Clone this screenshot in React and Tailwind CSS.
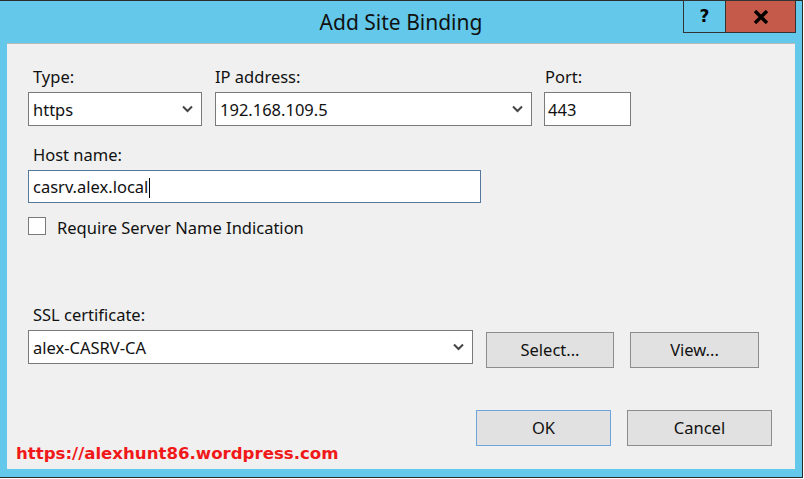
import React from "react";

const ui = { fontFamily: '"Noto Sans", "Open Sans", "Liberation Sans", sans-serif' };

// little dropdown chevron used by the combo boxes
function Chevron() {
  return (
    <svg width="11" height="8" viewBox="0 0 11 8" className="shrink-0">
      <polyline points="1,1.5 5.5,6 10,1.5" fill="none" stroke="#444" strokeWidth="2" />
    </svg>
  );
}

function Combo({ value, className }) {
  return (
    <div
      className={`flex items-center justify-between bg-white border border-[#7a7a7a] pl-[4px] pr-[8px] text-[16.5px] text-[#111] ${className}`}
    >
      <span className="pt-[2px]">{value}</span>
      <Chevron />
    </div>
  );
}

function Button({ children, className, blue }) {
  return (
    <div
      className={`flex items-center justify-center bg-[#e1e1e1] border pt-[1px] text-[16.5px] text-[#111] ${
        blue ? "border-[#6ea3dc]" : "border-[#8c8c8c]"
      } ${className}`}
    >
      {children}
    </div>
  );
}

export default function App() {
  return (
    <div
      className="relative w-[804px] h-[479px] overflow-hidden bg-white"
      style={ui}
    >
      <div className="flex flex-col w-[803px] h-[478px] bg-[#63c8ea] border-t border-r border-b border-[#2b2b2b]">
        {/* title bar */}
        <div className="relative flex h-[42px]">
          <div className="flex-1 flex justify-center pt-[6px] text-[21px] text-[#111]">
            Add Site Binding
          </div>
          <div className="absolute right-[6px] top-[-1px] flex h-[33px]">
            <div className="flex items-center justify-center w-[43px] border border-[#333] bg-[#63c8ea] text-[17px] font-bold text-black" style={{ fontFamily: '"DejaVu Sans", sans-serif' }}>
              ?
            </div>
            <div className="flex items-center justify-center w-[70px] border border-l-0 border-[#333] bg-[#c55a4b]">
              <svg width="16" height="14" viewBox="0 0 16 14">
                <path d="M2 1 L14 13 M14 1 L2 13" stroke="#000" strokeWidth="3.4" />
              </svg>
            </div>
          </div>
        </div>

        {/* client area */}
        <div className="ml-[7px] mr-[7px] h-[426px] bg-[#f0f0f0] border-t border-[#b9b9b9] pl-[21px] pt-[22px] text-[#111]">
          <div className="flex">
            <div className="flex flex-col w-[174px]">
              <div className="h-[20px] pl-[5px] text-[16.5px] leading-[22px]">Type:</div>
              <Combo value="https" className="mt-[6px] h-[34px]" />
            </div>
            <div className="flex flex-col w-[317px] ml-[13px]">
              <div className="h-[20px] text-[16.5px] leading-[22px]">IP address:</div>
              <Combo value="192.168.109.5" className="mt-[6px] h-[34px]" />
            </div>
            <div className="flex flex-col w-[87px] ml-[12px]">
              <div className="h-[20px] pl-[1px] text-[16.5px] leading-[22px]">Port:</div>
              <div className="mt-[6px] h-[34px] flex items-center bg-white border border-[#7a7a7a] pl-[3px] pt-[2px] text-[16.5px]">443</div>
            </div>
          </div>

          <div className="mt-[18px] h-[20px] pl-[5px] text-[16.5px] leading-[22px]">Host name:</div>
          <div className="mt-[6px] w-[453px] h-[33px] flex items-center bg-white border border-[#56789c] pl-[4px] pt-[2px] text-[16.5px]">
            casrv.alex.local
            <span className="inline-block w-[1px] h-[20px] bg-black ml-[1px]" />
          </div>

          <div className="mt-[14px] flex items-center h-[18px]">
            <div className="w-[18px] h-[18px] bg-white border border-[#7a7a7a]" />
            <span className="ml-[11px] pt-[3px] text-[16.5px] leading-[20px]">Require Server Name Indication</span>
          </div>

          <div className="mt-[69px] h-[20px] pl-[5px] text-[16.5px] leading-[22px]">SSL certificate:</div>
          <div className="mt-[6px] flex items-start">
            <Combo value="alex-CASRV-CA" className="w-[445px] h-[34px]" />
            <Button className="ml-[13px] mt-[2px] w-[128px] h-[36px]">Select...</Button>
            <Button className="ml-[16px] mt-[2px] w-[129px] h-[36px]">View...</Button>
          </div>

          <div className="mt-[42px] flex">
            <Button blue className="ml-[448px] w-[135px] h-[36px]">OK</Button>
            <Button className="ml-[16px] w-[145px] h-[36px]">Cancel</Button>
          </div>
        </div>
      </div>

      {/* watermark over the dialog */}
      <div
        className="absolute left-[16px] top-[442px] text-[16.6px] font-bold text-[#f01818]"
        style={{ fontFamily: '"DejaVu Sans", sans-serif' }}
      >
        https://alexhunt86.wordpress.com
      </div>
    </div>
  );
}
